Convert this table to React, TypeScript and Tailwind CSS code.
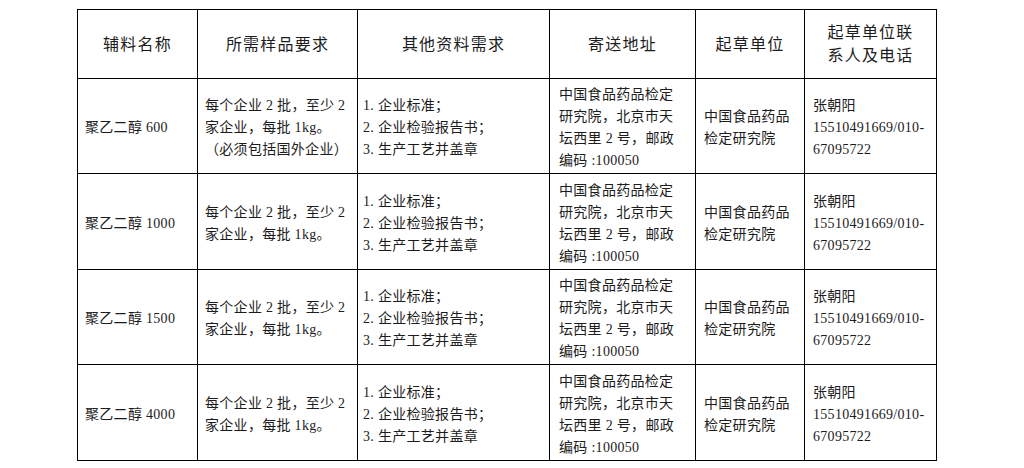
import React from "react";

const rows = [
  { name: "聚乙二醇 600", sample: ["每个企业 2 批，至少 2", "家企业，每批 1kg。", "（必须包括国外企业）"] },
  { name: "聚乙二醇 1000", sample: ["每个企业 2 批，至少 2", "家企业，每批 1kg。"] },
  { name: "聚乙二醇 1500", sample: ["每个企业 2 批，至少 2", "家企业，每批 1kg。"] },
  { name: "聚乙二醇 4000", sample: ["每个企业 2 批，至少 2", "家企业，每批 1kg。"] },
];

const docs = ["1. 企业标准；", "2. 企业检验报告书；", "3. 生产工艺并盖章"];
const address = ["中国食品药品检定", "研究院，北京市天", "坛西里 2 号，邮政", "编码 :100050"];
const unit = ["中国食品药品", "检定研究院"];
const contact = ["张朝阳", "15510491669/010-", "67095722"];

function Lines({ items }: { items: string[] }) {
  return (
    <>
      {items.map((t, i) => (
        <span key={i} className="block whitespace-nowrap">
          {t}
        </span>
      ))}
    </>
  );
}

export default function App() {
  return (
    <div
      className="w-[1024px] h-[468px] bg-white text-[#1c1c1c] overflow-hidden pt-[9px] pl-[77px]"
      style={{ fontFamily: '"Liberation Serif", "Noto Sans CJK SC", serif' }}
    >
      <table className="border-collapse table-fixed w-[859px]">
        <colgroup>
          <col className="w-[120px]" />
          <col className="w-[160px]" />
          <col className="w-[192px]" />
          <col className="w-[146px]" />
          <col className="w-[109px]" />
          <col className="w-[132px]" />
        </colgroup>
        <thead>
          <tr className="h-[69px] text-[16px] leading-[23px] tracking-[1.2px] text-center">
            <th className="border border-black font-normal">辅料名称</th>
            <th className="border border-black font-normal">所需样品要求</th>
            <th className="border border-black font-normal">其他资料需求</th>
            <th className="border border-black font-normal">寄送地址</th>
            <th className="border border-black font-normal">起草单位</th>
            <th className="border border-black font-normal">
              <span className="block">起草单位联</span>
              <span className="block">系人及电话</span>
            </th>
          </tr>
        </thead>
        <tbody className="text-[14px] leading-[22px] tracking-[0.3px]">
          {rows.map((r, i) => (
            <tr key={i} className={i % 2 === 0 ? "h-[95px]" : "h-[96px]"}>
              <td className="border border-black pl-[7px] pt-[4px] align-middle whitespace-nowrap">{r.name}</td>
              <td className="border border-black pl-[7px] pt-[4px] align-middle">
                <Lines items={r.sample} />
              </td>
              <td className="border border-black pl-[5px] pt-[4px] align-middle">
                <Lines items={docs} />
              </td>
              <td className="border border-black pl-[9px] pt-[4px] align-middle">
                <Lines items={address} />
              </td>
              <td className="border border-black pl-[8px] pt-[4px] align-middle">
                <Lines items={unit} />
              </td>
              <td className="border border-black pl-[8px] pt-[4px] align-middle">
                <Lines items={contact} />
              </td>
            </tr>
          ))}
        </tbody>
      </table>
    </div>
  );
}
